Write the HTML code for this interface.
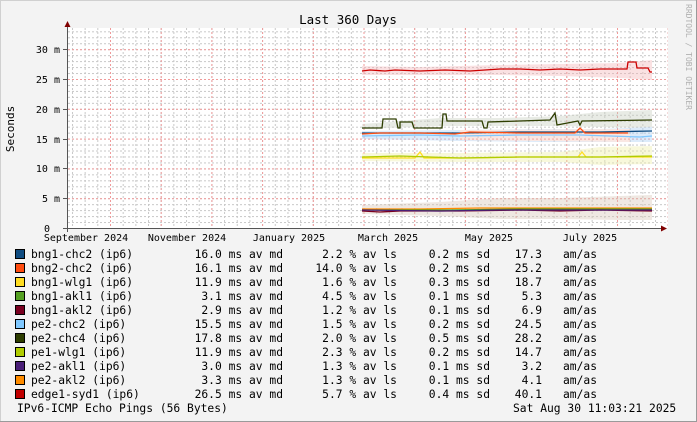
<!DOCTYPE html>
<html><head><meta charset="utf-8"><style>
html,body{margin:0;padding:0;background:#f3f3f3;}
svg{display:block;}
text{font-family:"DejaVu Sans Mono","Liberation Mono",monospace;fill:#000;}
</style></head><body>
<svg width="697" height="422" viewBox="0 0 697 422" xmlns="http://www.w3.org/2000/svg">
<defs>
<pattern id="vmin" patternUnits="userSpaceOnUse" x="110" y="0" width="12.675" height="4">
<line x1="0.5" y1="0" x2="0.5" y2="2" stroke="#c8c8c8" stroke-width="1"/></pattern>
<pattern id="hmin" patternUnits="userSpaceOnUse" x="0" y="228" width="4" height="5.96">
<line x1="0" y1="0.5" x2="2" y2="0.5" stroke="#c8c8c8" stroke-width="1"/></pattern>
<pattern id="vmaj" patternUnits="userSpaceOnUse" x="110" y="0" width="50.7" height="4">
<line x1="0.5" y1="0" x2="0.5" y2="2" stroke="#f09a9a" stroke-width="1"/></pattern>
<pattern id="hmaj" patternUnits="userSpaceOnUse" x="0" y="228" width="4" height="29.8">
<line x1="0" y1="0.5" x2="2" y2="0.5" stroke="#f09a9a" stroke-width="1"/></pattern>
</defs>
<rect x="0" y="0" width="697" height="422" fill="#f3f3f3"/>
<rect x="0.5" y="0.5" width="696" height="421" fill="none" stroke="#d0d0d0"/>
<line x1="0" y1="421.5" x2="697" y2="421.5" stroke="#9a9a9a"/>
<line x1="696.5" y1="0" x2="696.5" y2="422" stroke="#9a9a9a"/>
<rect x="67" y="28" width="601" height="200" fill="#fff"/>
<rect x="68" y="28" width="600" height="200" fill="url(#vmin)"/>
<rect x="68" y="28" width="600" height="200" fill="url(#hmin)"/>
<rect x="68" y="28" width="600" height="200" fill="url(#vmaj)"/>
<rect x="68" y="28" width="600" height="200" fill="url(#hmaj)"/>

<!-- smoke -->
<g opacity="0.4">
<path fill="#f5b5b8" d="M362 66 L420 67 L500 65 L560 64 L620 63 L652 60 L652 80 L620 78 L560 76 L500 75 L420 75 L362 75 Z"/>
<path fill="#c8cfc0" d="M362 124 L440 118 L500 118 L560 116 L600 112 L652 110 L652 128 L600 127 L560 126 L500 126 L440 126 L362 129 Z"/>
<path fill="#a9cff5" d="M362 131 L460 130 L540 129 L600 129 L652 127 L652 142 L600 142 L540 142 L460 141 L362 139 Z"/>
<path fill="#f5c4b8" d="M460 130 L630 129 L630 142 L460 140 Z"/>
<path fill="#eef0a8" d="M362 153 L460 153 L560 152 L600 147 L652 146 L652 164 L600 165 L560 162 L460 162 L362 161 Z"/>
<path fill="#d8c8b8" d="M362 205 L440 202 L500 198 L560 198 L620 196 L652 195 L652 220 L620 220 L560 219 L500 219 L440 216 L362 214 Z"/>
</g>

<!-- data lines -->
<g fill="none" stroke-width="1.3">
<path stroke="#cc0000" d="M362 71 L370 70 L385 71 L395 70 L420 71 L445 70 L470 71 L500 69 L520 69 L540 70 L560 69 L580 70 L600 69 L627 69 L628 62 L636 62 L637 68 L648 68 L650 72 L652 72"/>
<path stroke="#2d3d00" d="M362 128 L382 128 L383 119 L396 119 L398 128 L400 128 L400 122 L412 122 L414 128 L442 128 L443 114 L446 114 L447 121 L482 121 L484 128 L487 128 L488 122 L550 120 L555 113 L557 125 L578 121 L580 125 L582 121 L652 120"/>
<path stroke="#80c8ff" d="M362 136 L420 135 L460 136 L520 135 L580 135 L640 137 L652 136"/>
<path stroke="#0f4c81" d="M362 133 L460 133 L520 132 L600 132 L652 131"/>
<path stroke="#ff4c10" d="M362 134 L380 133 L420 133 L455 134 L470 132 L520 133 L575 133 L580 128 L585 133 L628 133"/>
<path stroke="#ffdd22" d="M362 158 L415 158 L420 152 L424 158 L470 158 L520 157 L578 157 L582 152 L586 157 L652 157"/>
<path stroke="#b0cc00" d="M362 157 L400 156 L460 158 L520 157 L560 157 L600 157 L652 156"/>
<path stroke="#ff8c00" d="M362 209 L420 209 L480 208 L540 208 L600 208 L652 208"/>
<path stroke="#55a022" d="M362 210 L450 210 L520 209 L600 209 L652 209"/>
<path stroke="#7a0020" d="M362 211 L380 212 L400 211 L460 211 L520 210 L560 211 L600 210 L652 211"/>
<path stroke="#4a1f78" d="M362 210 L440 211 L500 210 L600 210 L652 210"/>
</g>

<!-- axes -->
<line x1="67.5" y1="26" x2="67.5" y2="232" stroke="#555"/>
<line x1="63" y1="228.5" x2="662" y2="228.5" stroke="#555"/>
<polygon points="67.5,21 64.5,27 70.5,27" fill="#800000"/>
<polygon points="667,228.5 661,225.5 661,231.5" fill="#800000"/>
<g stroke="#555">
<line x1="63" y1="49.5" x2="67" y2="49.5"/><line x1="63" y1="79.5" x2="67" y2="79.5"/>
<line x1="63" y1="109.5" x2="67" y2="109.5"/><line x1="63" y1="139.5" x2="67" y2="139.5"/>
<line x1="63" y1="168.5" x2="67" y2="168.5"/><line x1="63" y1="198.5" x2="67" y2="198.5"/>
</g>

<g font-size="10" text-anchor="end">
<text x="60" y="53">30 m</text><text x="60" y="83">25 m</text><text x="60" y="113">20 m</text>
<text x="60" y="143">15 m</text><text x="60" y="172">10 m</text><text x="60" y="202">5 m</text>
</g>
<text x="44" y="232" font-size="10">0</text>
<g font-size="10" text-anchor="middle">
<text x="86" y="241">September 2024</text><text x="187" y="241">November 2024</text>
<text x="289" y="241">January 2025</text><text x="388" y="241">March 2025</text>
<text x="489" y="241">May 2025</text><text x="590" y="241">July 2025</text>
</g>
<text x="348" y="24" font-size="12.5" text-anchor="middle">Last 360 Days</text>
<text transform="translate(14,129) rotate(-90)" font-size="11" text-anchor="middle">Seconds</text>
<text transform="translate(686,4) rotate(90)" font-size="8" style="fill:#b0b0b0">RRDTOOL / TOBI OETIKER</text>

<!-- legend -->
<g stroke="#000" stroke-width="1">
<rect x="15.5" y="249.5" width="9" height="9" fill="#0f4c81"/>
<rect x="15.5" y="263.5" width="9" height="9" fill="#ff4c10"/>
<rect x="15.5" y="277.5" width="9" height="9" fill="#ffdd22"/>
<rect x="15.5" y="291.5" width="9" height="9" fill="#55a022"/>
<rect x="15.5" y="305.5" width="9" height="9" fill="#7a0020"/>
<rect x="15.5" y="319.5" width="9" height="9" fill="#80c8ff"/>
<rect x="15.5" y="333.5" width="9" height="9" fill="#2d3d00"/>
<rect x="15.5" y="347.5" width="9" height="9" fill="#b0cc00"/>
<rect x="15.5" y="361.5" width="9" height="9" fill="#4a1f78"/>
<rect x="15.5" y="375.5" width="9" height="9" fill="#ff8c00"/>
<rect x="15.5" y="389.5" width="9" height="9" fill="#c00000"/>
</g>
<g font-size="11.3">
<text x="31" y="258">bng1-chc2 (ip6)</text><text x="31" y="272">bng2-chc2 (ip6)</text>
<text x="31" y="286">bng1-wlg1 (ip6)</text><text x="31" y="300">bng1-akl1 (ip6)</text>
<text x="31" y="314">bng1-akl2 (ip6)</text><text x="31" y="328">pe2-chc2 (ip6)</text>
<text x="31" y="342">pe2-chc4 (ip6)</text><text x="31" y="356">pe1-wlg1 (ip6)</text>
<text x="31" y="370">pe2-akl1 (ip6)</text><text x="31" y="384">pe2-akl2 (ip6)</text>
<text x="31" y="398">edge1-syd1 (ip6)</text>
<text x="17" y="412">IPv6-ICMP Echo Pings (56 Bytes)</text>
<text x="513" y="412">Sat Aug 30 11:03:21 2025</text>
</g>
<g font-size="11.3" text-anchor="end">
<text x="283" y="258">16.0 ms av md</text><text x="283" y="272">16.1 ms av md</text>
<text x="283" y="286">11.9 ms av md</text><text x="283" y="300">3.1 ms av md</text>
<text x="283" y="314">2.9 ms av md</text><text x="283" y="328">15.5 ms av md</text>
<text x="283" y="342">17.8 ms av md</text><text x="283" y="356">11.9 ms av md</text>
<text x="283" y="370">3.0 ms av md</text><text x="283" y="384">3.3 ms av md</text>
<text x="283" y="398">26.5 ms av md</text>

<text x="397" y="258">2.2 % av ls</text><text x="397" y="272">14.0 % av ls</text>
<text x="397" y="286">1.6 % av ls</text><text x="397" y="300">4.5 % av ls</text>
<text x="397" y="314">1.2 % av ls</text><text x="397" y="328">1.5 % av ls</text>
<text x="397" y="342">2.0 % av ls</text><text x="397" y="356">2.3 % av ls</text>
<text x="397" y="370">1.3 % av ls</text><text x="397" y="384">1.3 % av ls</text>
<text x="397" y="398">5.7 % av ls</text>

<text x="490" y="258">0.2 ms sd</text><text x="490" y="272">0.2 ms sd</text>
<text x="490" y="286">0.3 ms sd</text><text x="490" y="300">0.1 ms sd</text>
<text x="490" y="314">0.1 ms sd</text><text x="490" y="328">0.2 ms sd</text>
<text x="490" y="342">0.5 ms sd</text><text x="490" y="356">0.2 ms sd</text>
<text x="490" y="370">0.1 ms sd</text><text x="490" y="384">0.1 ms sd</text>
<text x="490" y="398">0.4 ms sd</text>

<text x="542" y="258">17.3</text><text x="542" y="272">25.2</text>
<text x="542" y="286">18.7</text><text x="542" y="300">5.3</text>
<text x="542" y="314">6.9</text><text x="542" y="328">24.5</text>
<text x="542" y="342">28.2</text><text x="542" y="356">14.7</text>
<text x="542" y="370">3.2</text><text x="542" y="384">4.1</text>
<text x="542" y="398">40.1</text>

<text x="597" y="258">am/as</text><text x="597" y="272">am/as</text>
<text x="597" y="286">am/as</text><text x="597" y="300">am/as</text>
<text x="597" y="314">am/as</text><text x="597" y="328">am/as</text>
<text x="597" y="342">am/as</text><text x="597" y="356">am/as</text>
<text x="597" y="370">am/as</text><text x="597" y="384">am/as</text>
<text x="597" y="398">am/as</text>
</g>
</svg>
</body></html>
